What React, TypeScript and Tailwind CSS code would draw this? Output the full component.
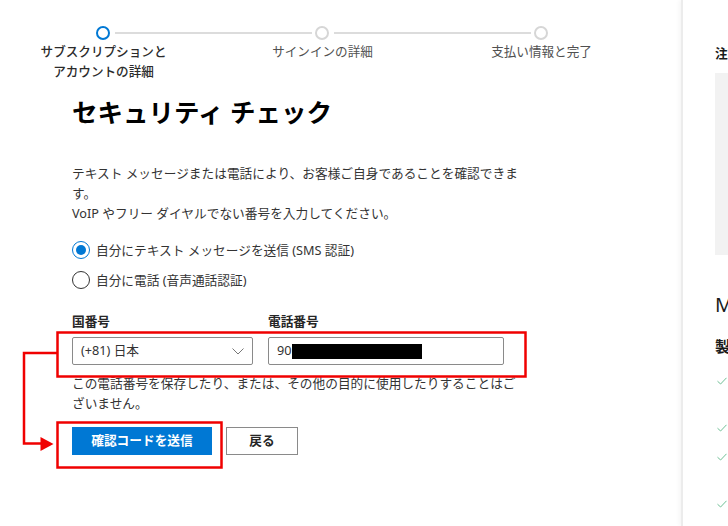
const font = "font-['Noto_Sans','Noto_Sans_CJK_JP',sans-serif]";

const Step = ({ label, active }: { label: React.ReactNode; active?: boolean }) => (
  <div
    className={`w-[219px] shrink-0 text-center text-[12.6px] leading-[20px] ${
      active ? "font-medium text-[#2b2b2b]" : "text-[#505050]"
    }`}
  >
    {label}
  </div>
);

const Radio = ({ checked, label }: { checked?: boolean; label: string }) => (
  <label className="flex items-center gap-[6px] h-[18px]">
    {checked ? (
      <span className="w-[18px] h-[18px] rounded-full border border-[#0078d4] flex items-center justify-center">
        <span className="w-[10px] h-[10px] rounded-full bg-[#0078d4]" />
      </span>
    ) : (
      <span className="w-[18px] h-[18px] rounded-full border-[1.5px] border-[#333]" />
    )}
    <span className="text-[12.7px] leading-[20px] text-[#333]">{label}</span>
  </label>
);

const Tick = () => (
  <svg width="10" height="8" viewBox="0 0 10 8" fill="none">
    <path d="M0.5 4.2 L3.6 7 L9.5 0.8" stroke="#6fbf95" strokeWidth="1" />
  </svg>
);

export default function App() {
  return (
    <div className={`relative w-[728px] h-[526px] overflow-hidden bg-white flex ${font}`}>
      {/* main column */}
      <div className="w-[681px] shrink-0">
        {/* progress */}
        <div className="pt-[26px] pl-[96px] flex items-center">
          <span className="w-[14px] h-[14px] rounded-full border-2 border-[#0078d4]" />
          <span className="ml-[5px] mr-[3px] w-[197px] h-[2px] bg-[#dcdcdc]" />
          <span className="w-[14px] h-[14px] rounded-full border-2 border-[#d6d6d6]" />
          <span className="ml-[5px] mr-[3px] w-[197px] h-[2px] bg-[#dcdcdc]" />
          <span className="w-[14px] h-[14px] rounded-full border-2 border-[#d6d6d6]" />
        </div>
        <div className="flex ml-[-6px] mt-[2px]">
          <Step
            active
            label={
              <>
                サブスクリプションと
                <br />
                アカウントの詳細
              </>
            }
          />
          <Step label="サインインの詳細" />
          <Step label="支払い情報と完了" />
        </div>

        {/* form */}
        <div className="pl-[72px]">
          <h1 className="mt-[13px] text-[25.5px] leading-[34px] font-bold text-black">
            セキュリティ チェック
          </h1>

          <p className="mt-[34px] w-[452px] text-[12.7px] leading-[20px] text-[#333]">
            テキスト メッセージまたは電話により、お客様ご自身であることを確認できます。
            <br />
            VoIP やフリー ダイヤルでない番号を入力してください。
          </p>

          <div className="mt-[18px] flex flex-col gap-[12px]">
            <Radio checked label="自分にテキスト メッセージを送信 (SMS 認証)" />
            <Radio label="自分に電話 (音声通話認証)" />
          </div>

          <div className="mt-[22px] flex gap-[15px]">
            <div className="w-[181px]">
              <div className="text-[12.7px] leading-[20px] font-bold text-[#262626]">国番号</div>
              <div className="mt-[6px] h-[28px] border border-[#8a8a8a] rounded-[2px] flex items-center justify-between pl-[8px] pr-[8px]">
                <span className="text-[12.7px] text-[#333]">(+81) 日本</span>
                <svg width="12" height="7" viewBox="0 0 12 7" fill="none">
                  <path d="M0.5 0.5 L6 6 L11.5 0.5" stroke="#777" strokeWidth="1" />
                </svg>
              </div>
            </div>
            <div className="w-[236px]">
              <div className="text-[12.7px] leading-[20px] font-bold text-[#262626]">電話番号</div>
              <div className="mt-[6px] h-[28px] border border-[#8a8a8a] rounded-[2px] flex items-center pl-[8px]">
                <span className="text-[12.7px] text-[#333]">90</span>
                <span className="w-[130px] h-[15px] bg-black" />
              </div>
            </div>
          </div>

          <p className="mt-[8px] w-[452px] text-[12.7px] leading-[20px] text-[#333]">
            この電話番号を保存したり、または、その他の目的に使用したりすることはございません。
          </p>

          <div className="mt-[14px] flex gap-[14px]">
            <button className="w-[140px] h-[28px] bg-[#0078d4] text-white text-[12.7px] font-bold">
              確認コードを送信
            </button>
            <button className="w-[72px] h-[28px] border border-[#8a8a8a] bg-white text-[#262626] text-[12.7px] font-bold">
              戻る
            </button>
          </div>
        </div>
      </div>

      {/* side panel */}
      <div className="flex-1 border-l-2 border-[#ececec] shadow-[-2px_0_4px_rgba(0,0,0,0.04)] pl-[32px]">
        <div className="mt-[43px] text-[12.7px] leading-[20px] font-bold text-[#1a1a1a] whitespace-nowrap">
          注文の概要
        </div>
        <div className="mt-[10px] h-[182px] w-[200px] bg-[#f2f2f2]" />
        <div className="mt-[36px] text-[20px] leading-[28px] text-[#1a1a1a] whitespace-nowrap">
          Microsoft 365
        </div>
        <div className="mt-[16px] text-[15px] leading-[22px] font-bold text-[#1a1a1a] whitespace-nowrap">
          製品の特長
        </div>
        <div className="pl-[2px]">
          <div className="mt-[20px]">
            <Tick />
          </div>
          <div className="mt-[39px]">
            <Tick />
          </div>
          <div className="mt-[21px]">
            <Tick />
          </div>
          <div className="mt-[39px]">
            <Tick />
          </div>
        </div>
      </div>

      {/* red callout marks */}
      <svg
        className="absolute inset-0 pointer-events-none"
        width="728"
        height="526"
        viewBox="0 0 728 526"
        fill="none"
      >
        <rect x="57.5" y="332.5" width="468" height="44" stroke="#f00000" strokeWidth="2.5" />
        <rect x="57.5" y="422.5" width="164" height="45" stroke="#f00000" strokeWidth="2.5" />
        <path d="M57 353 H24 V443.5 H42" stroke="#f00000" strokeWidth="2.5" />
        <path d="M40.5 437 L53.5 444 L40.5 451 Z" fill="#f00000" />
      </svg>
    </div>
  );
}
